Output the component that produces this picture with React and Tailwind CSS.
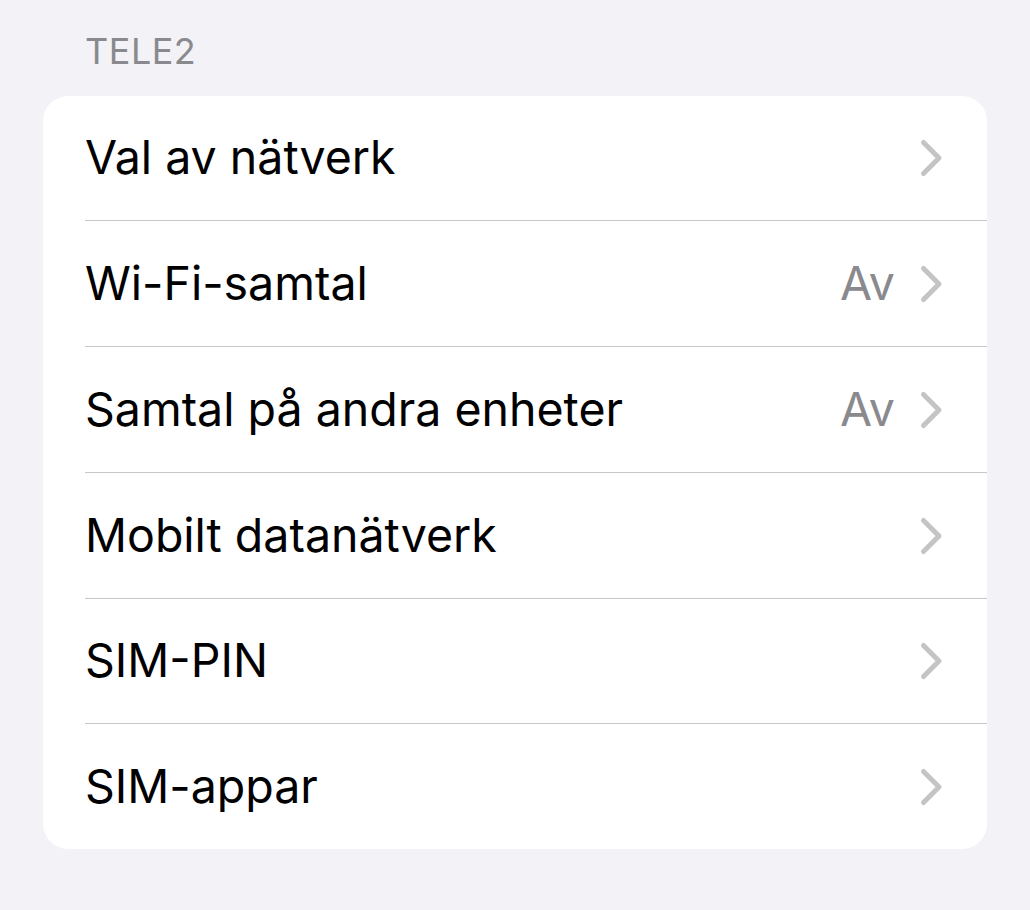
import React from "react";

const rows = [
  { label: "Val av nätverk", h: "h-[125px]" },
  { label: "Wi-Fi-samtal", value: "Av", h: "h-[126px]" },
  { label: "Samtal på andra enheter", value: "Av", h: "h-[126px]" },
  { label: "Mobilt datanätverk", h: "h-[126px]" },
  { label: "SIM-PIN", h: "h-[125px]" },
  { label: "SIM-appar", h: "h-[125px]" },
];

function Chevron() {
  return (
    <svg width="26" height="40" viewBox="0 0 26 40" className="shrink-0">
      <path d="M4.5 4.5 L20 20 L4.5 35.5" fill="none" stroke="#c4c4c7" strokeWidth="5" strokeLinecap="round" strokeLinejoin="round" />
    </svg>
  );
}

export default function App() {
  return (
    <div className="w-[1030px] h-[910px] bg-[#f2f2f7] pt-[29px] pl-[43px] pr-[43px]" style={{ fontFamily: "Inter, 'Noto Sans', sans-serif" }}>
      <div className="pl-[42px] text-[36px] leading-[44px] text-[#8a8a8e] tracking-[0.5px]">TELE2</div>
      <div className="mt-[23px] bg-white rounded-[25px] overflow-hidden">
        {rows.map((r, i) => (
          <div key={r.label} className="pl-[42px]">
            <div className={`flex items-center ${r.h} pr-[42px] ${i < rows.length - 1 ? "border-b border-[#c8c8cb]" : ""}`}>
              <div className="flex-1 text-[46.5px] text-black">{r.label}</div>
              {r.value && <div className="text-[46.5px] text-[#8a8a8e] mr-[24px]">{r.value}</div>}
              <Chevron />
            </div>
          </div>
        ))}
      </div>
    </div>
  );
}
